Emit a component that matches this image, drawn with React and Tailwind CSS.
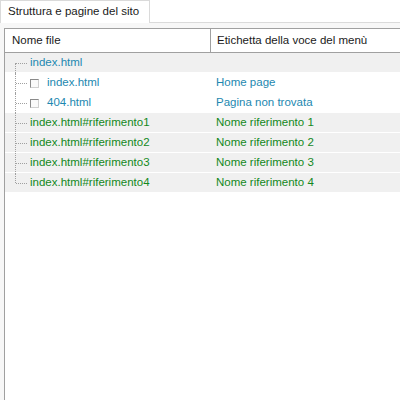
import React from 'react';

const rows = [
  { file: 'index.html', label: '', kind: 'root' },
  { file: 'index.html', label: 'Home page', kind: 'page' },
  { file: '404.html', label: 'Pagina non trovata', kind: 'page' },
  { file: 'index.html#riferimento1', label: 'Nome riferimento 1', kind: 'ref' },
  { file: 'index.html#riferimento2', label: 'Nome riferimento 2', kind: 'ref' },
  { file: 'index.html#riferimento3', label: 'Nome riferimento 3', kind: 'ref' },
  { file: 'index.html#riferimento4', label: 'Nome riferimento 4', kind: 'ref' },
];

const font = { fontFamily: '"Liberation Sans", Arial, sans-serif' };

const Row = ({ row, index }) => {
  const last = index === rows.length - 1;
  const shaded = row.kind !== 'page';
  const color = row.kind === 'ref' ? 'text-[#13881c]' : 'text-[#1d88b0]';
  return (
    <div className={`flex h-[20px] items-center text-[11.5px] ${shaded ? 'bg-[#f0f0f0] border-b border-white' : 'bg-white'} ${color}`}>
      <div className="relative w-[206px] h-full flex items-center shrink-0">
        {/* tree guides */}
        <div className={`absolute left-[10px] w-px border-l border-dotted border-[#a0a0a0] ${index === 0 ? 'top-[10px] h-[10px]' : last ? 'top-0 h-[10px]' : 'top-0 h-full'}`} />
        <div className="absolute left-[11px] top-[10px] w-[11px] border-t border-dotted border-[#a0a0a0]" />
        {row.kind === 'page' ? (
          <div className="flex items-center pl-[25px]">
            <span className="w-[9px] h-[9px] border border-t-[#8a8a8a] border-l-[#8a8a8a] border-r-[#d0d0d0] border-b-[#d0d0d0] bg-[#fafafa]" />
            <span className="ml-[8px]">{row.file}</span>
          </div>
        ) : (
          <span className="pl-[25px]">{row.file}</span>
        )}
      </div>
      <div className="pl-[5px]">{row.label}</div>
    </div>
  );
};

export default function App() {
  return (
    <div className="w-[400px] h-[400px] bg-white overflow-hidden flex flex-col text-[#1a1a1a]" style={font}>
      <div className="h-[23px] flex items-end border-b border-[#dadada] bg-white">
        <div className="h-[23px] w-[150px] mb-[-1px] bg-white border border-b-0 border-[#dadada] px-[7px] flex items-center text-[11.5px]">
          Struttura e pagine del sito
        </div>
      </div>
      <div className="flex-1 flex bg-[#f7f7f7] pt-[5px] pl-[4px]">
        <div className="flex-1 bg-white border-l border-t border-[#a0a0a0] flex flex-col">
          <div className="h-[24px] flex items-center border-b border-[#a0a0a0] text-[11.5px] text-[#1a1a1a]">
            <div className="w-[206px] h-full flex items-center pl-[7px] border-r border-[#a0a0a0] shrink-0">Nome file</div>
            <div className="pl-[6px]">Etichetta della voce del menù</div>
          </div>
          <div className="flex flex-col">
            {rows.map((r, i) => (
              <Row key={i} row={r} index={i} />
            ))}
          </div>
        </div>
      </div>
    </div>
  );
}
